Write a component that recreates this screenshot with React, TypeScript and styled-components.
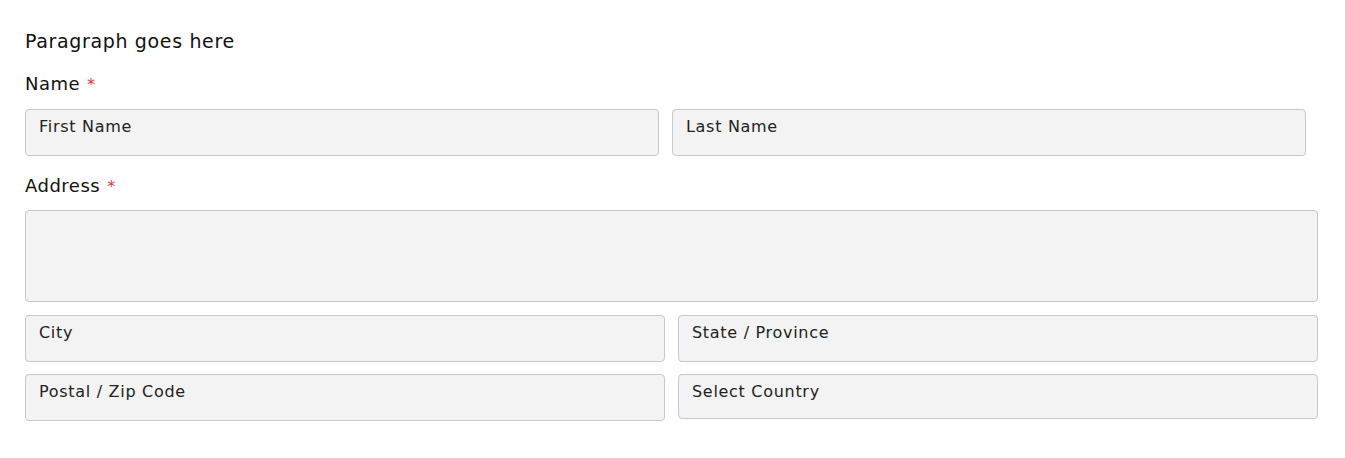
import React from "react";
import styled, { createGlobalStyle } from "styled-components";

const Global = createGlobalStyle`
  html, body { margin: 0; padding: 0; background: #ffffff; }
  body { font-family: "DejaVu Sans", "Liberation Sans", sans-serif; color: #111111; }
`;

const Page = styled.div`
  padding: 28px 27px 0 25px;
  width: 1293px;
  display: flex;
  flex-direction: column;
`;

const Paragraph = styled.p`
  margin: 0;
  font-size: 19px;
  line-height: 27px;
  letter-spacing: 0.65px;
`;

const Label = styled.div<{ $top: number }>`
  margin-top: ${(p) => p.$top}px;
  font-size: 18px;
  line-height: 24px;
  letter-spacing: 0.5px;
`;

const Required = styled.span`
  color: #e2334a;
  margin-left: 7px;
  font-size: 16px;
  line-height: 1;
`;

const Row = styled.div<{ $cols: string; $top: number }>`
  display: grid;
  grid-template-columns: ${(p) => p.$cols};
  column-gap: 13px;
  margin-top: ${(p) => p.$top}px;
`;

const Field = styled.div<{ $h?: number }>`
  box-sizing: border-box;
  height: ${(p) => p.$h ?? 47}px;
  background: #f3f3f3;
  border: 1px solid #c6c6d4;
  border-radius: 4px;
  padding: 6px 13px;
  font-size: 16px;
  line-height: 22px;
  letter-spacing: 0.7px;
  color: #222222;
`;

export default function App() {
  return (
    <>
      <Global />
      <Page>
        <Paragraph>Paragraph goes here</Paragraph>
        <Label $top={17}>
          Name<Required>*</Required>
        </Label>
        <Row $cols="634px 634px" $top={13}>
          <Field>First Name</Field>
          <Field>Last Name</Field>
        </Row>
        <Label $top={18}>
          Address<Required>*</Required>
        </Label>
        <Row $cols="1fr" $top={12}>
          <Field $h={92} />
        </Row>
        <Row $cols="1fr 1fr" $top={13}>
          <Field>City</Field>
          <Field>State / Province</Field>
        </Row>
        <Row $cols="1fr 1fr" $top={12}>
          <Field>Postal / Zip Code</Field>
          <Field $h={45}>Select Country</Field>
        </Row>
      </Page>
    </>
  );
}
